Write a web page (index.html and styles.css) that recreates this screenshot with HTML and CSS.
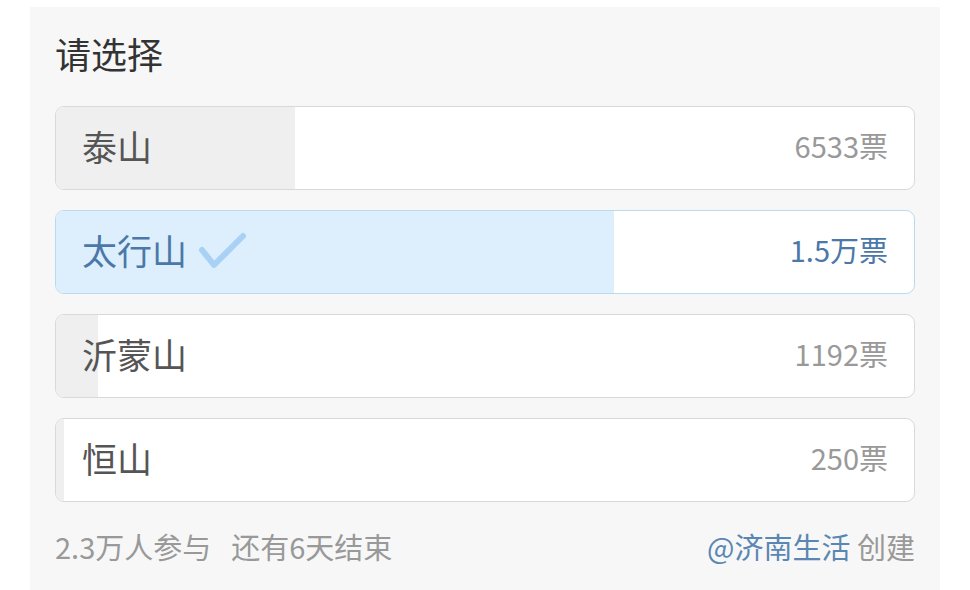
FILE: index.html
```html
<!DOCTYPE html>
<html lang="zh-CN">
<head>
  <meta charset="UTF-8">
  <title>投票</title>
  <link rel="stylesheet" href="styles.css">
</head>
<body>
<div class="poll">
  <div class="title">请选择</div>
  <div class="options">
    <div class="option">
      <div class="bar" style="width: 27.9%"></div>
      <span class="name">泰山</span>
      <span class="count">6533票</span>
    </div>
    <div class="option chosen">
      <div class="bar" style="width: 65%"></div>
      <span class="name">太行山
        <svg class="check" width="50" height="40" viewBox="0 0 50 40">
          <path d="M5 19 L17 34 L46 5" fill="none" stroke="#a9d1f5" stroke-width="6" stroke-linecap="round" stroke-linejoin="round"/>
        </svg>
      </span>
      <span class="count">1.5万票</span>
    </div>
    <div class="option">
      <div class="bar" style="width: 4.9%"></div>
      <span class="name">沂蒙山</span>
      <span class="count">1192票</span>
    </div>
    <div class="option">
      <div class="bar" style="width: 0.9%"></div>
      <span class="name">恒山</span>
      <span class="count">250票</span>
    </div>
  </div>
  <div class="footer">
    <span class="stats">2.3万人参与<span class="left">还有6天结束</span></span>
    <span class="author"><span class="user">@济南生活</span> 创建</span>
  </div>
</div>
</body>
</html>
```

FILE: styles.css
```css
body {
  margin: 0;
  background: #fff;
  font-family: "Noto Sans CJK SC", "Noto Sans", sans-serif;
}

.poll {
  margin: 7px 30px 0;
  height: 583px;
  box-sizing: border-box;
  padding: 24px 25px 0;
  background: #f7f7f7;
}

.title {
  font-size: 36px;
  line-height: 44px;
  color: #333;
  margin-bottom: 31px;
}

.options {
  display: flex;
  flex-direction: column;
  gap: 20px;
}

.option {
  position: relative;
  height: 84px;
  box-sizing: border-box;
  border: 1px solid #d9d9d9;
  border-radius: 9px;
  background: #fff;
  overflow: hidden;
  display: flex;
  align-items: center;
  justify-content: space-between;
  padding: 0 26px 6px;
}

.bar {
  position: absolute;
  left: 0;
  top: 0;
  bottom: 0;
  background: #efefef;
}

.name, .count {
  position: relative;
}

.name {
  font-size: 35px;
  color: #555;
  display: flex;
  align-items: center;
}

.count {
  font-size: 29px;
  color: #999;
}

.option.chosen {
  border-color: #b9dbef;
}

.chosen .bar {
  background: #ddeffc;
}

.chosen .name,
.chosen .count {
  color: #4b78a8;
}

.check {
  margin-left: 10px;
  margin-top: 4px;
}

.footer {
  display: flex;
  justify-content: space-between;
  margin-top: 26px;
  font-size: 29px;
  line-height: 36px;
  color: #999;
}

.left {
  margin-left: 20px;
}

.user {
  color: #5a86b4;
}
```
